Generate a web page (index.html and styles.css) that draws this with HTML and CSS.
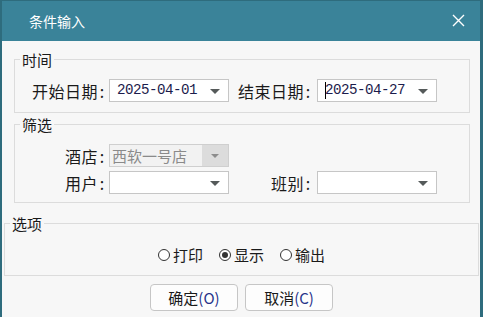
FILE: index.html
```html
<!DOCTYPE html>
<html lang="zh-CN">
<head>
<meta charset="utf-8">
<title>条件输入</title>
<link rel="stylesheet" href="styles.css">
</head>
<body>
<div class="window">
  <div class="titlebar">
    <span class="title">条件输入</span>
    <svg class="close" width="13" height="13" viewBox="0 0 13 13"><path d="M1 1 L12 12 M12 1 L1 12" stroke="#ffffff" stroke-width="1.4" fill="none"/></svg>
  </div>
  <div class="content">
    <fieldset class="group g-time">
      <legend>时间</legend>
      <div class="grid">
        <span class="lbl l1">开始日期<span class="colon">:</span></span>
        <div class="combo"><span class="val mono">2025-04-01</span><span class="arrowbox"><span class="arrow"></span></span></div>
        <span class="lbl l2">结束日期<span class="colon">:</span></span>
        <div class="combo"><span class="caret"></span><span class="val mono">2025-04-27</span><span class="arrowbox"><span class="arrow"></span></span></div>
      </div>
    </fieldset>
    <fieldset class="group g-filter">
      <legend>筛选</legend>
      <div class="grid rows">
        <span class="lbl l1">酒店<span class="colon">:</span></span>
        <div class="combo disabled"><span class="val">西软一号店</span><span class="arrowbox"><span class="arrow"></span></span></div>
        <span></span>
        <span></span>
        <span class="lbl l1">用户<span class="colon">:</span></span>
        <div class="combo"><span class="val"></span><span class="arrowbox"><span class="arrow"></span></span></div>
        <span class="lbl l2">班别<span class="colon">:</span></span>
        <div class="combo"><span class="val"></span><span class="arrowbox"><span class="arrow"></span></span></div>
      </div>
    </fieldset>
    <fieldset class="group g-opt">
      <legend>选项</legend>
      <div class="radios">
        <span class="radio"><span class="dot"></span>打印</span>
        <span class="radio checked"><span class="dot"></span>显示</span>
        <span class="radio"><span class="dot"></span>输出</span>
      </div>
    </fieldset>
    <div class="buttons">
      <span class="btn">确定<span class="acc">(O)</span></span>
      <span class="btn">取消<span class="acc">(C)</span></span>
    </div>
  </div>
</div>
</body>
</html>
```

FILE: styles.css
```css
html, body {
  margin: 0;
  padding: 0;
  background: #f7f7f7;
}
body {
  font-family: "Noto Sans CJK SC", "Noto Sans", sans-serif;
  color: #1a1a1a;
}
.window {
  width: 483px;
  height: 317px;
  box-sizing: border-box;
  border-left: 2px solid #2e6c7d;
  border-right: 3px solid #2e6c7d;
  background: #f7f7f7;
  overflow: hidden;
}
.titlebar {
  height: 41px;
  box-sizing: border-box;
  border-top: 1px solid #2e6c7d;
  background: #3a8399;
  display: flex;
  align-items: center;
  justify-content: space-between;
  padding: 0 15px 0 27px;
}
.title {
  color: #ffffff;
  font-size: 14px;
  line-height: 20px;
  margin-top: -1px;
}
.close {
  display: block;
  margin-top: -2px;
}
.content {
  padding-top: 11px;
}
.group {
  margin: 0 10px 0 12px;
  padding: 0;
  border: 1px solid #dcdcdc;
  min-width: 0;
}
.group legend {
  margin-left: 5px;
  padding: 0 2px;
  font-size: 15px;
  line-height: 15px;
  color: #1a1a1a;
}
.g-time .grid {
  padding: 12px 0 10px 0;
}
.g-filter {
  margin-top: 4px;
}
.g-filter .grid {
  padding: 12px 0 8px 0;
}
.grid {
  display: grid;
  grid-template-columns: 94px 120px 88px 120px;
  align-items: center;
}
.grid.rows {
  row-gap: 4px;
}
.lbl {
  font-size: 16px;
  line-height: 20px;
  text-align: right;
  white-space: nowrap;
  letter-spacing: 0.5px;
}
.lbl.l1 {
  padding-right: 3px;
}
.lbl.l2 {
  padding-right: 5px;
}
.colon {
  display: inline-block;
  width: 8px;
  text-align: center;
  letter-spacing: 0;
}
.combo {
  height: 23px;
  box-sizing: border-box;
  border: 1px solid #c6c6c6;
  background: #ffffff;
  display: flex;
  align-items: center;
}
.val {
  flex: 1;
  padding-left: 7px;
  font-size: 15px;
  line-height: 21px;
  white-space: nowrap;
  overflow: hidden;
}
.val.mono {
  font-family: "Liberation Mono", "DejaVu Sans Mono", monospace;
  font-size: 14.2px;
  letter-spacing: -0.5px;
  color: #1c1c4c;
}
.caret {
  width: 0;
  height: 17px;
  border-left: 1px solid #000;
  margin-left: 7px;
  margin-right: -8px;
}
.arrowbox {
  width: 26px;
  height: 100%;
  display: flex;
  align-items: center;
  justify-content: center;
}
.arrow {
  width: 0;
  height: 0;
  border-left: 5px solid transparent;
  border-right: 5px solid transparent;
  border-top: 5px solid #555a5a;
  margin-top: 1px;
}
.combo.disabled {
  background: #f2f2f2;
  border-color: #cfcfcf;
}
.combo.disabled .val {
  color: #8a8a8a;
  padding-left: 2px;
}
.combo.disabled .arrowbox {
  background: #dcdcdc;
}
.combo.disabled .arrow {
  border-top-color: #8c8c8c;
  border-left-width: 4px;
  border-right-width: 4px;
  border-top-width: 4px;
}
.g-opt {
  margin: 13px 1px 0 2px;
}
.radios {
  padding: 14px 0 10px 0;
  display: flex;
  justify-content: center;
  gap: 16px;
  font-size: 15px;
  line-height: 20px;
}
.radio {
  display: flex;
  align-items: center;
  gap: 3px;
}
.dot {
  width: 12px;
  height: 12px;
  box-sizing: border-box;
  border: 1px solid #333;
  border-radius: 50%;
  background: #ffffff;
  display: flex;
  align-items: center;
  justify-content: center;
}
.radio.checked .dot::after {
  content: "";
  width: 6px;
  height: 6px;
  border-radius: 50%;
  background: #333;
}
.buttons {
  margin-top: 8px;
  display: flex;
  justify-content: center;
  gap: 7px;
  padding-left: 1px;
}
.btn {
  width: 88px;
  height: 27px;
  box-sizing: border-box;
  border: 1px solid #c6c6c6;
  border-radius: 4px;
  background: #fdfdfd;
  display: flex;
  align-items: center;
  justify-content: center;
  font-size: 15px;
  line-height: 20px;
}
.acc {
  color: #27338a;
}
```
